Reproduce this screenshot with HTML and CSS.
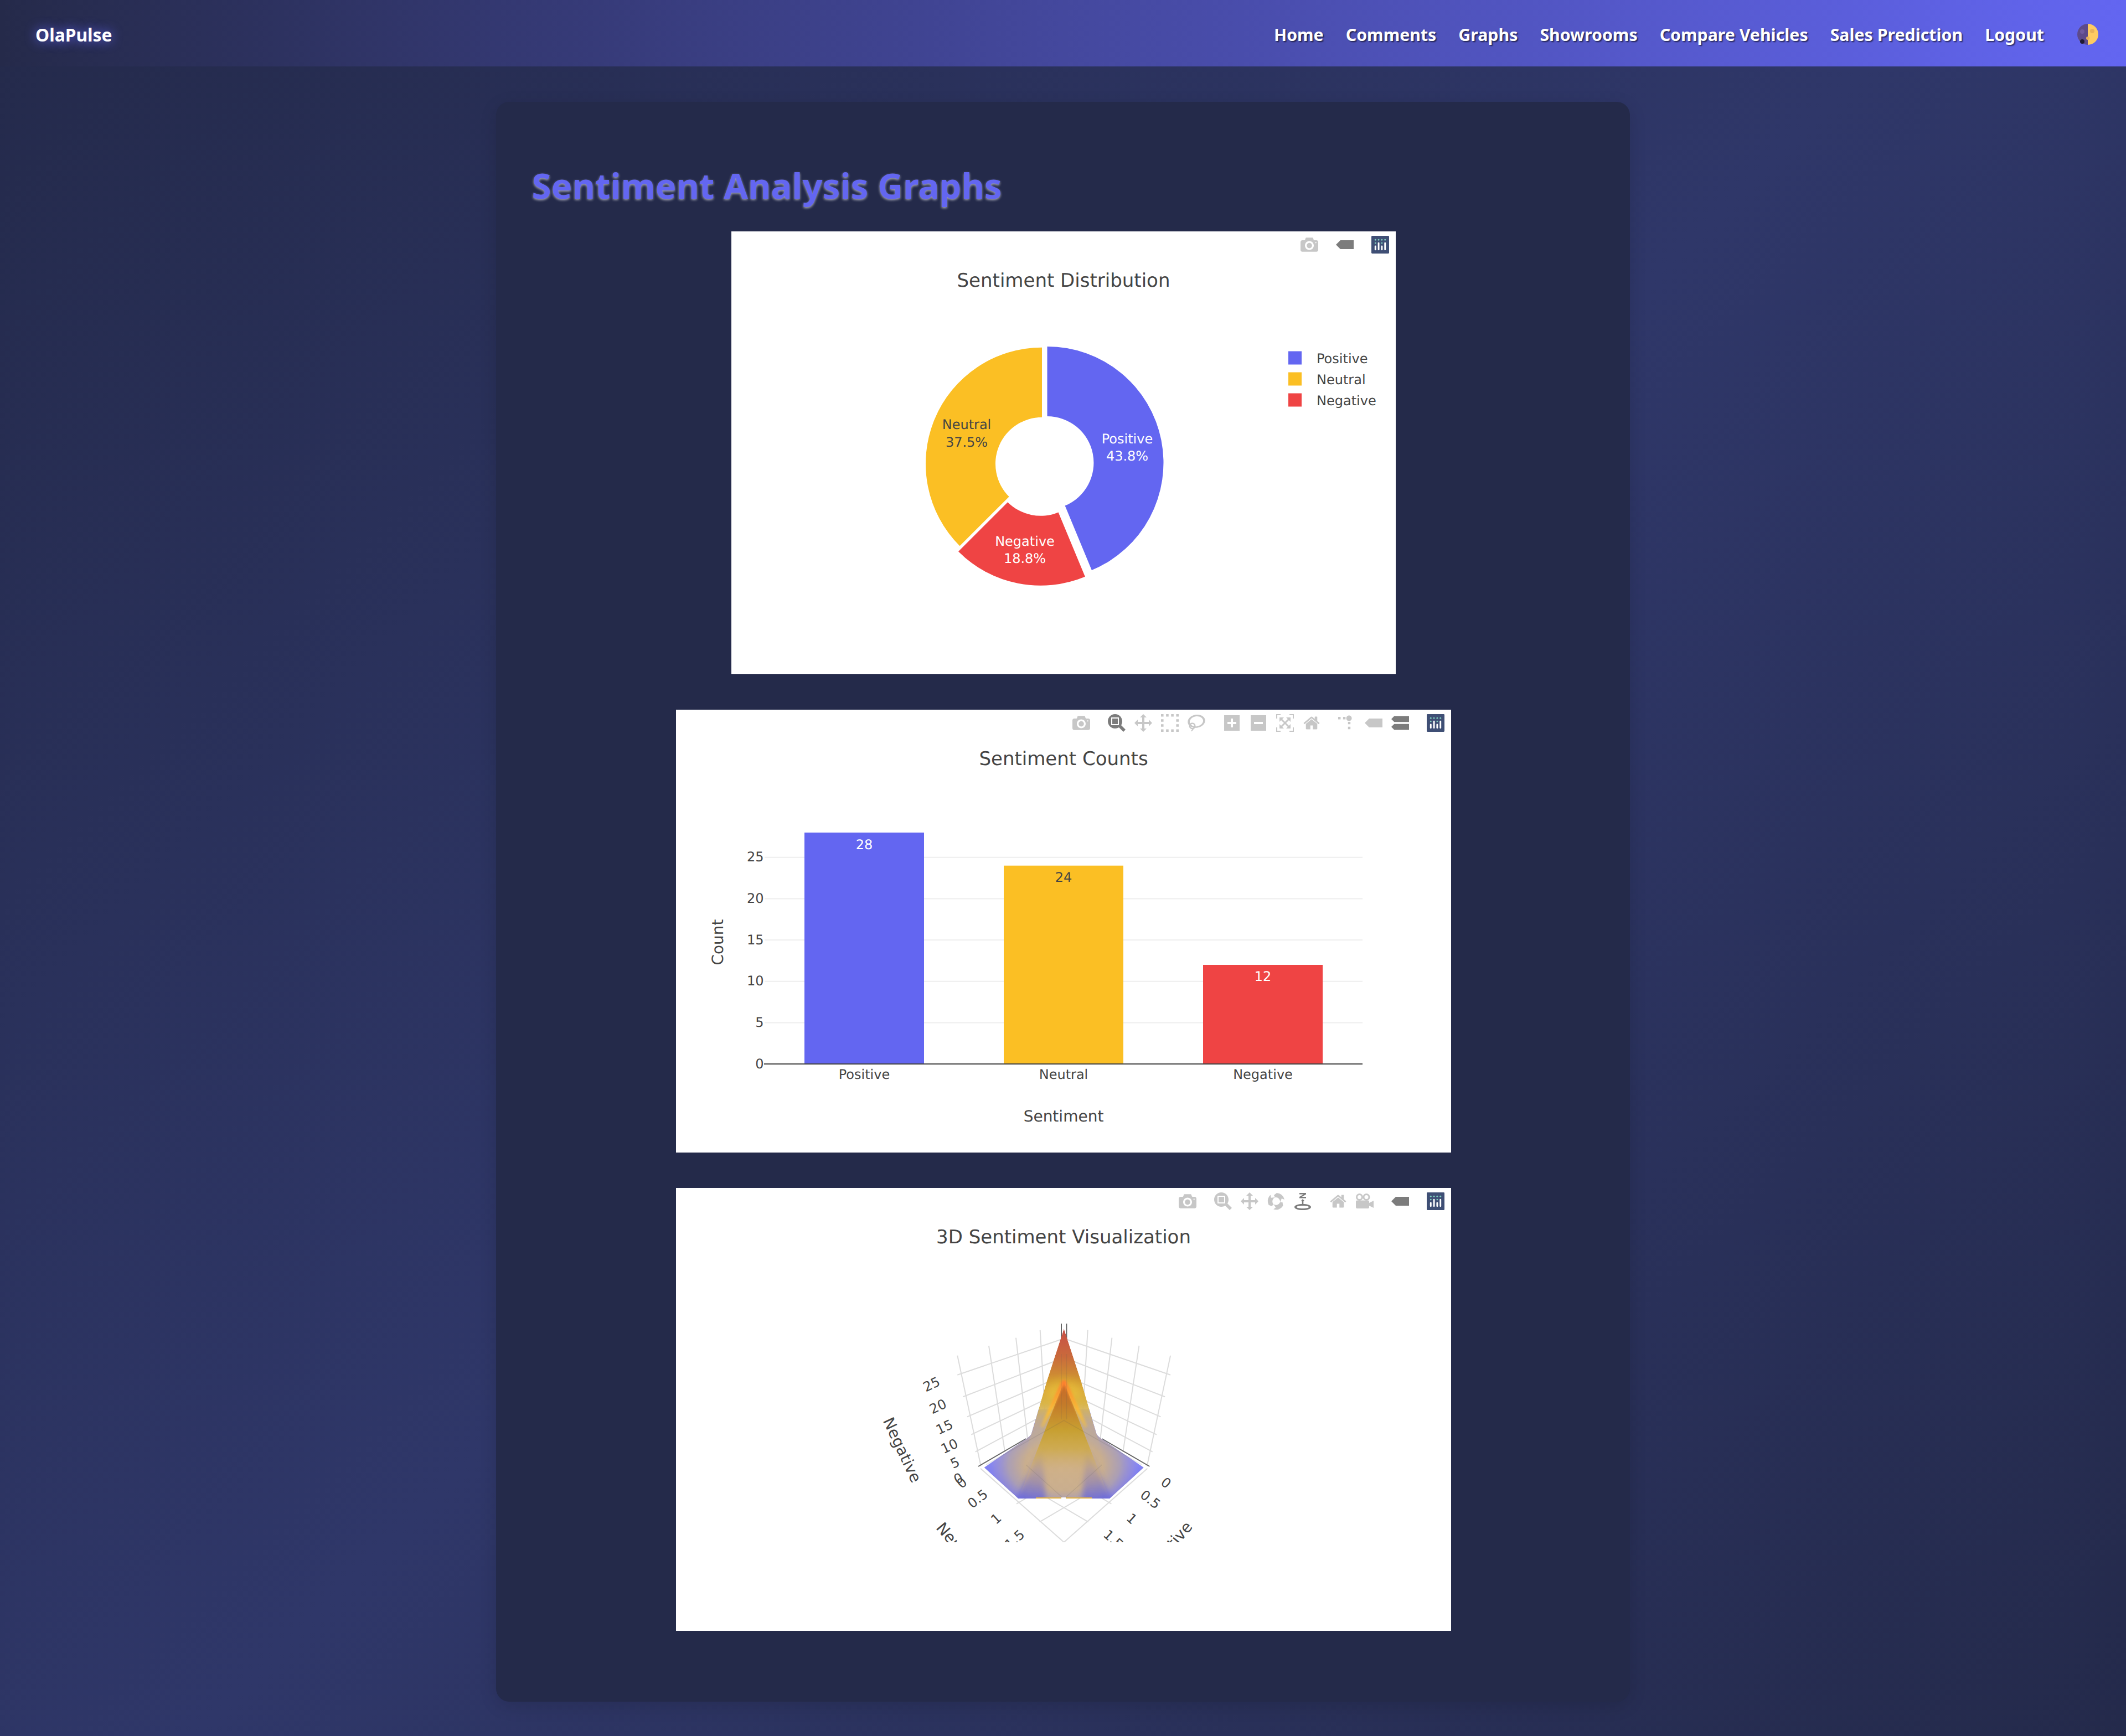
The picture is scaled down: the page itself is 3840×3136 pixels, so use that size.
FILE: index.html
```html
<!DOCTYPE html>
<html lang="en">
<head>
<meta charset="utf-8">
<title>OlaPulse - Sentiment Analysis Graphs</title>
<link rel="stylesheet" href="styles.css">
</head>
<body>
<svg class="sprite" aria-hidden="true">
  <symbol id="i-cam" viewBox="0 0 1000 1000"><path transform="matrix(1 0 0 -1 0 850)" d="m500 450c-83 0-150-67-150-150 0-83 67-150 150-150 83 0 150 67 150 150 0 83-67 150-150 150z m400 150h-120c-16 0-34 13-39 29l-31 93c-6 15-23 28-40 28h-340c-16 0-34-13-39-28l-31-94c-6-15-23-28-40-28h-120c-55 0-100-45-100-100v-450c0-55 45-100 100-100h800c55 0 100 45 100 100v450c0 55-45 100-100 100z m-400-550c-138 0-250 112-250 250 0 138 112 250 250 250 138 0 250-112 250-250 0-138-112-250-250-250z m365 380c-19 0-35 16-35 35 0 19 16 35 35 35 19 0 35-16 35-35 0-19-16-35-35-35z"/></symbol>
  <symbol id="i-zoom" viewBox="0 0 1000 1000"><path transform="matrix(1 0 0 -1 0 850)" d="m1000-25l-250 251c40 63 63 138 63 218 0 224-182 406-407 406-224 0-406-182-406-406s183-406 407-406c80 0 155 22 218 62l250-250 125 125z m-812 250l0 438 437 0 0-438-437 0z m62 375l313 0 0-312-313 0 0 312z"/></symbol>
  <symbol id="i-pan" viewBox="0 0 1000 1000"><path transform="matrix(1 0 0 -1 0 850)" d="m1000 350l-187 188 0-125-250 0 0 250 125 0-188 187-187-187 125 0 0-250-250 0 0 125-188-188 186-187 0 125 252 0 0-250-125 0 187-188 188 188-125 0 0 250 250 0 0-126 187 188z"/></symbol>
  <symbol id="i-box" viewBox="0 0 1000 1000"><path transform="matrix(1 0 0 -1 0 850)" d="m0 850l0-143 143 0 0 143-143 0z m286 0l0-143 143 0 0 143-143 0z m285 0l0-143 143 0 0 143-143 0z m286 0l0-143 143 0 0 143-143 0z m-857-286l0-143 143 0 0 143-143 0z m857 0l0-143 143 0 0 143-143 0z m-857-285l0-143 143 0 0 143-143 0z m857 0l0-143 143 0 0 143-143 0z m-857-286l0-143 143 0 0 143-143 0z m286 0l0-143 143 0 0 143-143 0z m285 0l0-143 143 0 0 143-143 0z m286 0l0-143 143 0 0 143-143 0z"/></symbol>
  <symbol id="i-lasso" viewBox="0 0 1031 1000"><path transform="matrix(1 0 0 -1 0 850)" d="m1018 538c-36 207-290 336-568 286-277-48-473-256-436-463 10-57 36-108 76-151-13-66 11-137 68-183 34-28 75-41 114-42l-55-70 0 0c-2-1-3-2-4-3-10-14-8-34 5-45 14-11 34-8 45 4 1 1 2 3 2 5l0 0 113 140c16 11 31 24 45 40 4 3 6 7 8 11 48-3 100 0 151 9 278 48 473 255 436 462z m-624-379c-80 14-149 48-197 96 42 42 109 47 156 9 33-26 47-66 41-105z m-187-74c-19 16-33 37-39 60 50-32 109-55 174-68-42-25-95-24-135 8z m360 75c-34-7-69-9-102-8 8 62-16 128-68 170-73 59-175 54-244-5-9 20-16 40-20 61-28 159 121 317 333 354s407-60 434-217c28-159-121-318-333-355z"/></symbol>
  <symbol id="i-plus" viewBox="0 0 875 1000"><path transform="matrix(1 0 0 -1 0 850)" d="m1 787l0-875 875 0 0 875-875 0z m687-500l-187 0 0-187-125 0 0 187-188 0 0 125 188 0 0 187 125 0 0-187 187 0 0-125z"/></symbol>
  <symbol id="i-minus" viewBox="0 0 875 1000"><path transform="matrix(1 0 0 -1 0 850)" d="m0 788l0-876 875 0 0 876-875 0z m688-500l-500 0 0 125 500 0 0-125z"/></symbol>
  <symbol id="i-auto" viewBox="0 0 1000 1000"><path transform="matrix(1 0 0 -1 0 850)" d="m250 850l-187 0-63 0 0-62 0-188 63 0 0 188 187 0 0 62z m688 0l-188 0 0-62 188 0 0-188 62 0 0 188 0 62-62 0z m-875-938l0 188-63 0 0-188 0-62 63 0 187 0 0 62-187 0z m875 188l0-188-188 0 0-62 188 0 62 0 0 62 0 188-62 0z m-125 188l-1 0-93-94-156 156 156 156 92-93 2 0 0 250-250 0 0-2 93-92-156-156-156 156 94 92 0 2-250 0 0-250 0 0 93 93 157-156-157-156-93 94 0 0 0-250 250 0 0 0-94 93 156 157 156-157-93-93 0 0 250 0 0 250z"/></symbol>
  <symbol id="i-home" viewBox="0 0 928.6 1000"><path transform="matrix(1 0 0 -1 0 850)" d="m786 296v-267q0-15-11-26t-25-10h-214v214h-143v-214h-214q-15 0-25 10t-11 26v267q0 1 0 2t0 2l321 264 321-264q1-1 1-4z m124 39l-34-41q-5-5-12-6h-2q-7 0-12 3l-386 322-386-322q-7-4-13-4-7 2-12 7l-35 41q-4 5-3 13t6 12l401 334q18 15 42 15t43-15l136-114v109q0 8 5 13t13 5h107q8 0 13-5t5-13v-227l122-102q5-5 6-12t-4-13z"/></symbol>
  <symbol id="i-spike" viewBox="0 0 1000 1000"><path transform="matrix(1.5 0 0 -1.5 0 850)" d="M512 409c0-57-46-104-103-104-57 0-104 47-104 104 0 57 47 103 104 103 57 0 103-46 103-103z m-327-39l92 0 0 92-92 0z m-185 0l92 0 0 92-92 0z m370-186l92 0 0 93-92 0z m0-184l92 0 0 92-92 0z"/></symbol>
  <symbol id="i-tag" viewBox="0 0 1500 1000"><path transform="matrix(1 0 0 -1 0 850)" d="m375 725l0 0-375-375 375-374 0-1 1125 0 0 750-1125 0z"/></symbol>
  <symbol id="i-compare" viewBox="0 0 1125 1000"><path transform="matrix(1 0 0 -1 0 850)" d="m187 786l0 2-187-188 188-187 0 0 937 0 0 373-938 0z m0-499l0 1-187-188 188-188 0 0 937 0 0 375-938 0z"/></symbol>
  <symbol id="i-orbit" viewBox="0 0 32 32"><path d="M17 1A15 15 0 0 1 31 13L26 11 23 18A8 8 0 0 0 14 9L12 5Z"/><path transform="rotate(120 16 16)" d="M17 1A15 15 0 0 1 31 13L26 11 23 18A8 8 0 0 0 14 9L12 5Z"/><path transform="rotate(240 16 16)" d="M17 1A15 15 0 0 1 31 13L26 11 23 18A8 8 0 0 0 14 9L12 5Z"/></symbol>
  <symbol id="i-turn" viewBox="0 0 32 32"><path d="M10 1H22V3.500L14.500 8H22V10.500H10V8L17.500 3.500H10Z"/><path d="M16 12L19.500 16H17.300V24H14.700V16H12.500Z"/><path fill-rule="evenodd" d="M16 21C24 21 31 23 31 26.500S24 32 16 32 1 30 1 26.500 8 21 16 21ZM16 24C10 24 5 25 5 26.500S10 29 16 29 27 28 27 26.500 22 24 16 24Z"/></symbol>
  <symbol id="i-video" viewBox="0 0 32 32"><path fill-rule="evenodd" d="M6.500 2A6.500 6.500 0 1 1 6.500 15 6.500 6.500 0 0 1 6.500 2ZM6.500 5A3.500 3.500 0 1 0 6.500 12 3.500 3.500 0 0 0 6.500 5Z"/><path fill-rule="evenodd" d="M19 2A6.500 6.500 0 1 1 19 15 6.500 6.500 0 0 1 19 2ZM19 5A3.500 3.500 0 1 0 19 12 3.500 3.500 0 0 0 19 5Z"/><path d="M2 14.500H22Q24 14.500 24 16.500V19L32 15V28L24 24V27Q24 29 22 29H2Q0 29 0 27V16.500Q0 14.500 2 14.500Z"/></symbol>
  <symbol id="i-logo" viewBox="0 0 132 132">
    <rect class="logo-bg" width="132" height="132" rx="6"/>
    <g class="logo-dot"><circle cx="30" cy="30" r="6"/><circle cx="54" cy="30" r="6"/><circle cx="78" cy="30" r="6"/><circle cx="102" cy="30" r="6"/><circle cx="30" cy="54" r="6"/><circle cx="78" cy="54" r="6"/></g>
    <g class="logo-bar"><rect x="24" y="72" width="12" height="36" rx="6"/><rect x="48" y="48" width="12" height="60" rx="6"/><rect x="72" y="72" width="12" height="36" rx="6"/><rect x="96" y="48" width="12" height="60" rx="6"/></g>
  </symbol>
  <defs>
    <linearGradient id="g-spike" gradientUnits="userSpaceOnUse" x1="0" y1="254" x2="0" y2="480">
      <stop offset="0" stop-color="#c94f47"/><stop offset=".22" stop-color="#c9693c"/><stop offset=".42" stop-color="#cf9631"/><stop offset=".6" stop-color="#d9b54a"/><stop offset=".78" stop-color="#cdb27c" stop-opacity=".7"/><stop offset="1" stop-color="#c8b090" stop-opacity="0"/>
    </linearGradient>
    <linearGradient id="g-blue" gradientUnits="userSpaceOnUse" x1="0" y1="480" x2="0" y2="561">
      <stop offset="0" stop-color="#8a8af8"/><stop offset="1" stop-color="#6b6be4"/>
    </linearGradient>
    <radialGradient id="g-mound" gradientUnits="userSpaceOnUse" cx="0" cy="0" r="1" gradientTransform="translate(700.700 500) scale(140 92)">
      <stop offset="0" stop-color="#cdb193"/><stop offset=".5" stop-color="#c9ae8e"/><stop offset=".72" stop-color="#b0a2ae" stop-opacity=".9"/><stop offset=".9" stop-color="#9a92d8" stop-opacity=".5"/><stop offset="1" stop-color="#8a8af8" stop-opacity="0"/>
    </radialGradient>
    <linearGradient id="g-inner" gradientUnits="userSpaceOnUse" x1="0" y1="348" x2="0" y2="561">
      <stop offset="0" stop-color="#c8672a"/><stop offset=".2" stop-color="#c47a2a"/><stop offset=".42" stop-color="#c89f2c" stop-opacity=".95"/><stop offset=".58" stop-color="#cfa93e" stop-opacity=".75"/><stop offset=".75" stop-color="#d3b077" stop-opacity=".4"/><stop offset="1" stop-color="#cdb193" stop-opacity="0"/>
    </linearGradient>
    <linearGradient id="g-edge" gradientUnits="userSpaceOnUse" x1="0" y1="348" x2="0" y2="450">
      <stop offset="0" stop-color="#ff7a2e"/><stop offset=".55" stop-color="#ffbd30"/><stop offset="1" stop-color="#ffc830" stop-opacity="0"/>
    </linearGradient>
    <linearGradient id="g-band" gradientUnits="userSpaceOnUse" x1="0" y1="450" x2="0" y2="561">
      <stop offset="0" stop-color="#6a68c8" stop-opacity="0"/><stop offset="1" stop-color="#5f5fdc"/>
    </linearGradient>
    <filter id="f-soft" x="-30%" y="-30%" width="160%" height="160%"><feGaussianBlur stdDeviation="9"/></filter>
    <filter id="f-soft-m" x="-60%" y="-30%" width="220%" height="160%"><feGaussianBlur stdDeviation="5"/></filter>
    <filter id="f-soft-s" x="-30%" y="-30%" width="160%" height="160%"><feGaussianBlur stdDeviation="2"/></filter>
    <clipPath id="c-scene"><rect x="160" y="200" width="1080" height="440"/></clipPath>
    <clipPath id="c-surface"><path d="M700.700 254.300L670 348.300 641.700 445Q638 450 630 455L556.700 505 618.300 561H783.100L844.700 505 771.400 455Q763.400 450 759.700 445L731.400 348.300Z"/></clipPath>
  </defs>
</svg>

<nav class="navbar">
  <a class="brand" href="#">OlaPulse</a>
  <div class="nav-right">
    <ul class="nav-links">
      <li><a href="#">Home</a></li>
      <li><a href="#">Comments</a></li>
      <li><a href="#">Graphs</a></li>
      <li><a href="#">Showrooms</a></li>
      <li><a href="#">Compare Vehicles</a></li>
      <li><a href="#">Sales Prediction</a></li>
      <li><a href="#">Logout</a></li>
    </ul>
    <svg class="theme-toggle" viewBox="0 0 38 38" aria-label="Toggle theme">
      <path class="moon-dark" d="M19 0A19 19 0 0 0 19 38Z"/>
      <path class="moon-light" d="M19 0A19 19 0 0 1 19 38Z"/>
      <circle class="crater-dark" cx="9" cy="14" r="4"/>
      <circle class="crater-black" cx="9" cy="32" r="4"/>
      <circle class="crater-light" cx="27" cy="13" r="4"/>
      <circle class="crater-light" cx="19" cy="26" r="3"/>
    </svg>
  </div>
</nav>

<main class="page">
  <section class="panel">
    <h1 class="panel-title">Sentiment Analysis Graphs</h1>

    <figure class="chart chart-small">
      <div class="modebar">
        <div class="mb-group"><span class="mb-btn"><svg class="ico"><use href="#i-cam"/></svg></span></div>
        <div class="mb-group"><span class="mb-btn"><svg class="ico on"><use href="#i-tag"/></svg></span></div>
        <div class="mb-group"><span class="mb-btn"><svg class="ico"><use href="#i-logo"/></svg></span></div>
      </div>
      <svg class="plot" viewBox="0 0 1200 800">
        <text class="t-title" x="600" y="99.500">Sentiment Distribution</text>
        <path class="c-indigo" d="M570.500 208A210 210 0 0 1 650.900 612L602.600 495.600A84 84 0 0 0 570.500 334Z"/>
        <path class="c-red" d="M638.900 623.800A210 210 0 0 1 410 578.300L499.100 489.200A84 84 0 0 0 590.600 507.400Z"/>
        <path class="c-amber" d="M412.500 568.300A210 210 0 0 1 561 209.800V335.800A84 84 0 0 0 501.600 479.200Z"/>
        <text class="t-mid t-white" x="715" y="383">Positive</text>
        <text class="t-mid t-white" x="715" y="414">43.8%</text>
        <text class="t-mid" x="425" y="357">Neutral</text>
        <text class="t-mid" x="425" y="388.500">37.5%</text>
        <text class="t-mid t-white" x="530" y="568">Negative</text>
        <text class="t-mid t-white" x="530" y="599">18.8%</text>
        <rect class="c-indigo" x="1006" y="216.500" width="24" height="24"/>
        <rect class="c-amber" x="1006" y="254.500" width="24" height="24"/>
        <rect class="c-red" x="1006" y="292.500" width="24" height="24"/>
        <text class="t-tick" x="1057" y="237.500">Positive</text>
        <text class="t-tick" x="1057" y="275.500">Neutral</text>
        <text class="t-tick" x="1057" y="313.500">Negative</text>
      </svg>
    </figure>

    <figure class="chart chart-wide">
      <div class="modebar">
        <div class="mb-group"><span class="mb-btn"><svg class="ico"><use href="#i-cam"/></svg></span></div>
        <div class="mb-group">
          <span class="mb-btn"><svg class="ico on"><use href="#i-zoom"/></svg></span>
          <span class="mb-btn"><svg class="ico"><use href="#i-pan"/></svg></span>
          <span class="mb-btn"><svg class="ico"><use href="#i-box"/></svg></span>
          <span class="mb-btn"><svg class="ico"><use href="#i-lasso"/></svg></span>
        </div>
        <div class="mb-group">
          <span class="mb-btn"><svg class="ico"><use href="#i-plus"/></svg></span>
          <span class="mb-btn"><svg class="ico"><use href="#i-minus"/></svg></span>
          <span class="mb-btn"><svg class="ico"><use href="#i-auto"/></svg></span>
          <span class="mb-btn"><svg class="ico"><use href="#i-home"/></svg></span>
        </div>
        <div class="mb-group">
          <span class="mb-btn"><svg class="ico"><use href="#i-spike"/></svg></span>
          <span class="mb-btn"><svg class="ico"><use href="#i-tag"/></svg></span>
          <span class="mb-btn"><svg class="ico on"><use href="#i-compare"/></svg></span>
        </div>
        <div class="mb-group"><span class="mb-btn"><svg class="ico"><use href="#i-logo"/></svg></span></div>
      </div>
      <svg class="plot" viewBox="0 0 1400 800">
        <text class="t-title" x="700" y="99.500">Sentiment Counts</text>
        <g class="grid">
          <line x1="160" x2="1240" y1="565.400" y2="565.400"/>
          <line x1="160" x2="1240" y1="490.700" y2="490.700"/>
          <line x1="160" x2="1240" y1="416" y2="416"/>
          <line x1="160" x2="1240" y1="341.400" y2="341.400"/>
          <line x1="160" x2="1240" y1="266.700" y2="266.700"/>
        </g>
        <rect class="c-indigo" x="232" y="222" width="216" height="418"/>
        <rect class="c-amber" x="592" y="281.700" width="216" height="358.300"/>
        <rect class="c-red" x="952" y="461" width="216" height="179"/>
        <line class="axis-line" x1="159" x2="1240" y1="640" y2="640"/>
        <text class="t-mid t-white" x="340" y="252">28</text>
        <text class="t-mid" x="700" y="311">24</text>
        <text class="t-mid t-white" x="1060" y="490">12</text>
        <g class="t-end">
          <text x="158.500" y="647.500">0</text>
          <text x="158.500" y="573">5</text>
          <text x="158.500" y="498">10</text>
          <text x="158.500" y="423.500">15</text>
          <text x="158.500" y="349">20</text>
          <text x="158.500" y="274">25</text>
        </g>
        <text class="t-mid" x="340" y="666.500">Positive</text>
        <text class="t-mid" x="700" y="666.500">Neutral</text>
        <text class="t-mid" x="1060" y="666.500">Negative</text>
        <text class="t-axis" transform="translate(85 420) rotate(-90)">Count</text>
        <text class="t-axis" x="700" y="743.500">Sentiment</text>
      </svg>
    </figure>

    <figure class="chart chart-wide">
      <div class="modebar">
        <div class="mb-group"><span class="mb-btn"><svg class="ico"><use href="#i-cam"/></svg></span></div>
        <div class="mb-group">
          <span class="mb-btn"><svg class="ico"><use href="#i-zoom"/></svg></span>
          <span class="mb-btn"><svg class="ico"><use href="#i-pan"/></svg></span>
          <span class="mb-btn"><svg class="ico"><use href="#i-orbit"/></svg></span>
          <span class="mb-btn"><svg class="ico on"><use href="#i-turn"/></svg></span>
        </div>
        <div class="mb-group">
          <span class="mb-btn"><svg class="ico"><use href="#i-home"/></svg></span>
          <span class="mb-btn"><svg class="ico"><use href="#i-video"/></svg></span>
        </div>
        <div class="mb-group"><span class="mb-btn"><svg class="ico on"><use href="#i-tag"/></svg></span></div>
        <div class="mb-group"><span class="mb-btn"><svg class="ico"><use href="#i-logo"/></svg></span></div>
      </div>
      <svg class="plot" viewBox="0 0 1400 800">
        <text class="t-title" x="700" y="99.500">3D Sentiment Visualization</text>
        <g clip-path="url(#c-scene)">
          <g class="grid3d">
            <line x1="508.300" y1="302.700" x2="550.700" y2="502.700"/>
            <line x1="565" y1="285" x2="594" y2="476.700"/>
            <line x1="614" y1="270.700" x2="635" y2="453"/>
            <line x1="657.700" y1="256.700" x2="668.300" y2="436.700"/>
            <line x1="893.100" y1="302.700" x2="850.700" y2="502.700"/>
            <line x1="836.400" y1="285" x2="807.400" y2="476.700"/>
            <line x1="787.400" y1="270.700" x2="766.400" y2="453"/>
            <line x1="743.700" y1="256.700" x2="733.100" y2="436.700"/>
            <line x1="508.300" y1="337.700" x2="696.700" y2="273.300"/>
            <line x1="518.300" y1="377.300" x2="696.700" y2="308"/>
            <line x1="526" y1="413.300" x2="696.700" y2="340"/>
            <line x1="533.300" y1="445.700" x2="696.700" y2="368"/>
            <line x1="540.700" y1="476.700" x2="696.700" y2="393"/>
            <line x1="893.100" y1="337.700" x2="704.700" y2="273.300"/>
            <line x1="883.100" y1="377.300" x2="704.700" y2="308"/>
            <line x1="875.400" y1="413.300" x2="704.700" y2="340"/>
            <line x1="868.100" y1="445.700" x2="704.700" y2="368"/>
            <line x1="860.700" y1="476.700" x2="704.700" y2="393"/>
            <line x1="550" y1="506.700" x2="700.700" y2="640"/>
            <line x1="851.400" y1="506.700" x2="700.700" y2="640"/>
            <line x1="656.700" y1="603.300" x2="807" y2="515"/>
            <line x1="744.700" y1="603.300" x2="594.400" y2="515"/>
            <line x1="615" y1="570.700" x2="640" y2="556"/>
            <line x1="786.400" y1="570.700" x2="761.400" y2="556"/>
          </g>
          <g class="axis3d">
            <line x1="696" y1="245" x2="696" y2="415"/>
            <line x1="705.400" y1="245" x2="705.400" y2="415"/>
            <line x1="546" y1="503" x2="632" y2="453"/>
            <line x1="855.400" y1="503" x2="769.400" y2="453"/>
          </g>
          <g clip-path="url(#c-surface)">
            <rect class="s-blue" x="540" y="400" width="320" height="165"/>
            <rect class="s-mound" x="540" y="400" width="320" height="165"/>
            <path class="s-spike" d="M700.700 254.300L670 348.300 641.700 445 630 480H771.400L759.700 445 731.400 348.300Z"/>
            <ellipse class="s-halo" cx="700.700" cy="368" rx="36" ry="20"/>
            <path class="s-band" d="M612 566L660 470 668 566Z"/>
            <path class="s-band" d="M789 566L741 470 733 566Z"/>
            <path class="s-inner" d="M700.700 350L618.300 561H783.100Z"/>
            <path class="s-edge" d="M700.700 348L661 432M700.700 348L740.400 432"/>
            <line class="s-base" x1="650" y1="560" x2="751" y2="560"/>
          </g>
          <g class="grid-over">
            <line x1="696" y1="300" x2="696" y2="418"/>
            <line x1="705.400" y1="300" x2="705.400" y2="418"/>
            <line x1="700.700" y1="420" x2="560" y2="500"/>
            <line x1="700.700" y1="420" x2="841.400" y2="500"/>
            <line x1="632" y1="500" x2="700" y2="561"/>
            <line x1="769.400" y1="500" x2="701.400" y2="561"/>
          </g>
          <rect class="s-notch" x="696" y="559" width="8" height="3"/>
          <g class="t-3d">
            <text transform="translate(461.700 355) rotate(-25)">25</text>
            <text transform="translate(473.300 395) rotate(-25)">20</text>
            <text transform="translate(485 432.300) rotate(-25)">15</text>
            <text transform="translate(494 466.700) rotate(-25)">10</text>
            <text transform="translate(504 496.700) rotate(-25)">5</text>
            <text transform="translate(510 525) rotate(-25)">0</text>
            <text transform="translate(516.400 533) rotate(-40)">0</text>
            <text transform="translate(545 561.700) rotate(-38)">0.5</text>
            <text transform="translate(578.300 597.700) rotate(-42)">1</text>
            <text transform="translate(611.700 635) rotate(-42)">1.5</text>
            <text transform="translate(885 533) rotate(38)">0</text>
            <text transform="translate(856.700 563) rotate(38)">0.5</text>
            <text transform="translate(823 597.700) rotate(42)">1</text>
            <text transform="translate(789.700 635) rotate(42)">1.5</text>
          </g>
          <text class="t-axis3" transform="translate(408.300 473.300) rotate(65)">Negative</text>
          <text class="t-axis3" transform="translate(509 648) rotate(50)">Neutral</text>
          <text class="t-axis3" transform="translate(892 648) rotate(-50)">Positive</text>
        </g>
      </svg>
    </figure>
  </section>
</main>
</body>
</html>
```

FILE: styles.css
```css
* { box-sizing: border-box; }

html, body { margin: 0; padding: 0; }

body {
  min-height: 3136px;
  font-family: "Noto Sans", "Open Sans", sans-serif;
  background: linear-gradient(135deg, #242a4b 0%, #2f3769 50%, #242a4b 100%);
}

.sprite { position: absolute; width: 0; height: 0; overflow: hidden; }

/* Navbar */
.navbar {
  display: flex;
  align-items: center;
  justify-content: space-between;
  height: 120px;
  padding: 4px 50px 0 64px;
  background: linear-gradient(90deg, #252a4a 0%, #6366f1 100%);
}

.brand {
  font-size: 31.800px;
  font-weight: 700;
  color: #fff;
  text-decoration: none;
  text-shadow: 0 0 20px #6366f1;
}

.nav-right { display: flex; align-items: center; gap: 60px; }

.nav-links {
  display: flex;
  gap: 40px;
  margin: 0;
  padding: 0;
  list-style: none;
}

.nav-links a {
  font-size: 30.300px;
  font-weight: 700;
  color: #fff;
  text-decoration: none;
  text-shadow: 2px 2px 2px rgba(0, 0, 0, .55);
}

.theme-toggle { width: 38px; height: 38px; display: block; }
.moon-dark { fill: #5d4a8a; }
.moon-light { fill: #fdcb62; }
.crater-dark { fill: #6f5a9e; }
.crater-black { fill: #1f1a33; }
.crater-light { fill: #e8b25a; }

/* Page */
.page { padding: 64px 0; }

.panel {
  width: 2048px;
  margin: 0 auto;
  padding: 64px 63.500px 64px 64.500px;
  background: #242a4a;
  border-radius: 24px;
  box-shadow: 0 8px 32px rgba(0, 0, 0, .12);
}

.panel-title {
  margin: 0;
  height: 169.500px;
  padding-top: 43px;
  font-size: 63.600px;
  line-height: 88px;
  font-weight: 700;
  color: #6366f1;
  text-shadow: 0 2px 4px rgba(255, 255, 255, .6);
}

.chart {
  position: relative;
  height: 800px;
  margin: 0 auto 64px;
  background: #fff;
}

.chart-small { width: 1200px; }
.chart-wide { width: 1400px; }

.plot { display: block; width: 100%; height: 100%; }

/* Modebar */
.modebar {
  position: absolute;
  top: 2.500px;
  right: 4px;
  display: flex;
}

.mb-group { display: flex; padding-left: 16px; }
.mb-btn { display: block; padding: 6px 8px; }
.ico { display: block; width: 32px; height: 32px; fill: #c7c7c7; }
.ico.on { fill: #7c7c7c; }
.logo-bg { fill: #3f4f75; }
.logo-dot { fill: #80cfbe; }
.logo-bar { fill: #fff; }

/* Plot text */
.plot text {
  font-family: "DejaVu Sans", sans-serif;
  fill: #444;
  text-rendering: geometricPrecision;
}
.t-title { font-size: 34px; text-anchor: middle; }
.t-mid { font-size: 24px; text-anchor: middle; }
.plot .t-white { fill: #fff; }
.t-tick { font-size: 24px; }
.t-end text { font-size: 24px; text-anchor: end; }
.t-axis { font-size: 28px; text-anchor: middle; }
.t-3d text { font-size: 24px; text-anchor: middle; dominant-baseline: central; }
.t-axis3 { font-size: 28px; text-anchor: middle; dominant-baseline: central; }

.c-indigo { fill: #6366f1; }
.c-amber { fill: #fbbf24; }
.c-red { fill: #ef4444; }

.grid line { stroke: #eee; stroke-width: 2; }
.axis-line { stroke: #444; stroke-width: 2; }

/* 3D scene */
.grid3d line { stroke: #dcdcdc; stroke-width: 2; }
.axis3d line { stroke: #666; stroke-width: 2; }
.s-blue { fill: url(#g-blue); }
.s-mound { fill: url(#g-mound); }
.s-spike { fill: url(#g-spike); }
.s-band { fill: url(#g-band); opacity: .7; filter: url(#f-soft-m); }
.s-halo { fill: #f2c838; opacity: .6; filter: url(#f-soft); }
.s-inner { fill: url(#g-inner); }
.s-edge { fill: none; stroke: url(#g-edge); stroke-width: 6; filter: url(#f-soft-s); }
.s-base { stroke: #e0b040; stroke-width: 2; }
.grid-over line { stroke: #555; stroke-width: 1.500; opacity: .14; }
.s-notch { fill: #fff; }
```
